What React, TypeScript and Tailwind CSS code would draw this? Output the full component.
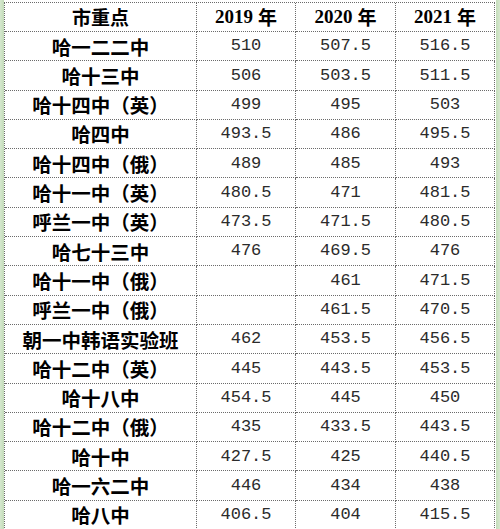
const rows: [string, string, string, string][] = [
  ["哈一二二中", "510", "507.5", "516.5"],
  ["哈十三中", "506", "503.5", "511.5"],
  ["哈十四中（英）", "499", "495", "503"],
  ["哈四中", "493.5", "486", "495.5"],
  ["哈十四中（俄）", "489", "485", "493"],
  ["哈十一中（英）", "480.5", "471", "481.5"],
  ["呼兰一中（英）", "473.5", "471.5", "480.5"],
  ["哈七十三中", "476", "469.5", "476"],
  ["哈十一中（俄）", "", "461", "471.5"],
  ["呼兰一中（俄）", "", "461.5", "470.5"],
  ["朝一中韩语实验班", "462", "453.5", "456.5"],
  ["哈十二中（英）", "445", "443.5", "453.5"],
  ["哈十八中", "454.5", "445", "450"],
  ["哈十二中（俄）", "435", "433.5", "443.5"],
  ["哈十中", "427.5", "425", "440.5"],
  ["哈一六二中", "446", "434", "438"],
  ["哈八中", "406.5", "404", "415.5"],
];

const cjk = "font-['Noto_Sans_CJK_SC',sans-serif]";
const cell = "flex items-center justify-center border-r border-b border-dotted border-[#6b6b6b]";

const YearHead = ({ year }: { year: string }) => (
  <div className={`${cell} h-[29px] text-[19px] font-bold text-black`}>
    <span className="font-['Liberation_Serif',serif]">{year}</span>
    <span className={`${cjk} ml-[5px]`}>年</span>
  </div>
);

export default function App() {
  return (
    <div className="flex h-[529px] w-[500px] overflow-hidden bg-white">
      <div className="w-[4px] shrink-0 bg-gradient-to-r from-[#d6e8cf] to-[#c3dcb9]" />
      <div className="w-[491px] shrink-0 pt-[2px]">
        <div className="grid grid-cols-[192px_99px_100px_99px] border-l border-t border-dotted border-[#6b6b6b]">
          <div className={`${cell} ${cjk} h-[29px] text-[19px] font-bold text-black`}>市重点</div>
          <YearHead year="2019" />
          <YearHead year="2020" />
          <YearHead year="2021" />
          {rows.map(([name, a, b, c]) => (
            <div key={name} className="contents">
              <div className={`${cell} ${cjk} h-[29.3px] text-[19.5px] font-bold text-black`}>{name}</div>
              {[a, b, c].map((v, i) => (
                <div
                  key={i}
                  className={`${cell} h-[29.3px] font-['Liberation_Mono',monospace] text-[17px] text-[#2b2b2b]`}
                >
                  {v}
                </div>
              ))}
            </div>
          ))}
        </div>
      </div>
      <div className="w-[1px] shrink-0" />
      <div className="w-[4px] shrink-0 bg-gradient-to-r from-[#c3dcb9] to-[#d6e8cf]" />
    </div>
  );
}
